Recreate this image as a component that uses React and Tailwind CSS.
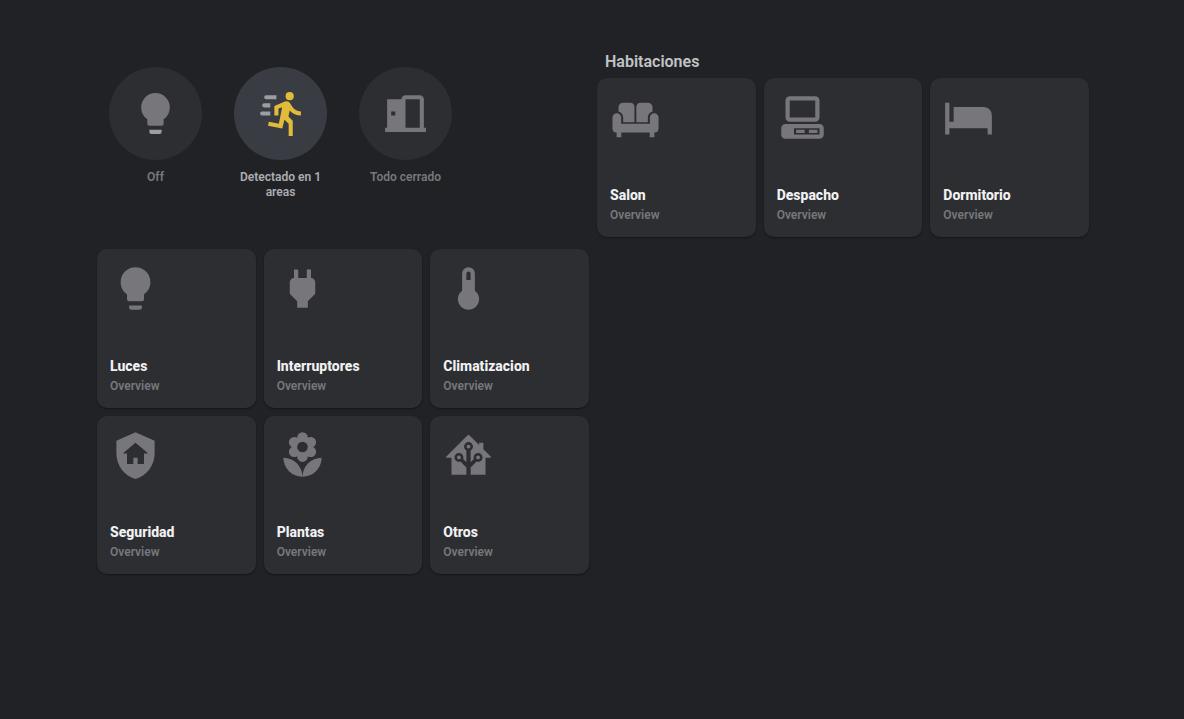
const lightbulb =
  'M12,2A7,7 0 0,0 5,9C5,11.38 6.19,13.47 8,14.74V17A1,1 0 0,0 9,18H15A1,1 0 0,0 16,17V14.74C17.81,13.47 19,11.38 19,9A7,7 0 0,0 12,2Z';
const lightbulbBase = 'M9,21A1,1 0 0,0 10,22H14A1,1 0 0,0 15,21V20H9V21Z';
const runner =
  'M16.5,5.5A2,2 0 0,0 18.5,3.5A2,2 0 0,0 16.5,1.5A2,2 0 0,0 14.5,3.5A2,2 0 0,0 16.5,5.5M12.9,19.4L13.9,15L16,17V23H18V15.5L15.9,13.5L16.5,10.5C17.89,12.09 19.89,13 22,13V11C20.24,11.03 18.6,10.11 17.7,8.6L16.7,7C16.34,6.4 15.7,6 15,6C14.7,6 14.5,6.1 14.2,6.1L9,8.3V13H11V9.6L12.8,8.9L11.2,17L6.3,16L5.9,18L12.9,19.4Z';
const speedLines =
  'M4,9A1,1 0 0,1 3,8A1,1 0 0,1 4,7H7V9H4M5,5A1,1 0 0,1 4,4A1,1 0 0,1 5,3H10V5H5M3,13A1,1 0 0,1 2,12A1,1 0 0,1 3,11H7V13H3Z';
const door =
  'M12,3C10.89,3 10,3.89 10,5H3V19H2V21H22V19H21V5C21,3.89 20.11,3 19,3H12M12,5H19V19H12V5M5,11H7V13H5V11Z';
const sofa =
  'M6.2,5H9.5A2,2 0 0,1 11.5,7V14.2H6.2V12.4A3.2,3.2 0 0,0 4,9.2V7.2A2.2,2.2 0 0,1 6.2,5M14.4,5H17.8A2.2,2.2 0 0,1 20,7.2V9.2A3.2,3.2 0 0,0 17.8,12.4V14.2H12.4V7A2,2 0 0,1 14.4,5M3.2,10A2.05,2.05 0 0,1 5.25,12.05V14.9H18.75V12.05A2.05,2.05 0 0,1 22.85,12.05V17A2.1,2.1 0 0,1 20.9,19.1V21.3H18.7V19.1H5.3V21.3H3.1V19.1A2.1,2.1 0 0,1 1.15,17V12.05A2.05,2.05 0 0,1 3.2,10Z';
const desktop =
  'M6,2C4.89,2 4,2.89 4,4V12C4,13.11 4.89,14 6,14H18C19.11,14 20,13.11 20,12V4C20,2.89 19.11,2 18,2H6M6,4H18V12H6V4M4,15C2.89,15 2,15.89 2,17V20C2,21.11 2.89,22 4,22H20C21.11,22 22,21.11 22,20V17C22,15.89 21.11,15 20,15H4M8,17H20V20H8V17M9,17.75V19.25H13V17.75H9M15,17.75V19.25H19V17.75H15Z';
const bed = 'M19,7H5V14H3V5H1V20H3V17H21V20H23V11A4,4 0 0,0 19,7';
const plug =
  'M16,7V3H14V7H10V3H8V7H8C7,7 6,8 6,9V14.5L9.5,18V21H14.5V18L18,14.5V9C18,8 17,7 16,7Z';
const thermometer =
  'M15,13V5A3,3 0 0,0 12,2A3,3 0 0,0 9,5V13A5,5 0 1,0 15,13M12,4A1,1 0 0,1 13,5V8H11V5A1,1 0 0,1 12,4Z';
const shieldHome =
  'M11,13H13V16H16V11H18L12,6L6,11H8V16H11V13M12,1L21,5V11C21,16.55 17.16,21.74 12,23C6.84,21.74 3,16.55 3,11V5L12,1Z';
const flower =
  'M3,13A9,9 0 0,0 12,22C12,17 7.97,13 3,13M12,5.5A2.5,2.5 0 0,1 14.5,8A2.5,2.5 0 0,1 12,10.5A2.5,2.5 0 0,1 9.5,8A2.5,2.5 0 0,1 12,5.5M5.6,10.25A2.5,2.5 0 0,0 8.1,12.75C8.63,12.75 9.12,12.58 9.5,12.31C9.5,12.37 9.5,12.43 9.5,12.5A2.5,2.5 0 0,0 12,15A2.5,2.5 0 0,0 14.5,12.5C14.5,12.43 14.5,12.37 14.5,12.31C14.88,12.58 15.37,12.75 15.9,12.75C17.28,12.75 18.4,11.63 18.4,10.25C18.4,9.25 17.81,8.4 16.97,8C17.81,7.6 18.4,6.74 18.4,5.75C18.4,4.37 17.28,3.25 15.9,3.25C15.37,3.25 14.88,3.41 14.5,3.69C14.5,3.63 14.5,3.56 14.5,3.5A2.5,2.5 0 0,0 12,1A2.5,2.5 0 0,0 9.5,3.5C9.5,3.56 9.5,3.63 9.5,3.69C9.12,3.41 8.63,3.25 8.1,3.25A2.5,2.5 0 0,0 5.6,5.75C5.6,6.74 6.19,7.6 7.03,8C6.19,8.4 5.6,9.25 5.6,10.25M12,22A9,9 0 0,0 21,13C16,13 12,17 12,22Z';
const homeTree =
  'M21.8,13H20V21H13V17.67L15.79,14.88L16.5,15C17.66,15 18.6,14.06 18.6,12.9C18.6,11.74 17.66,10.8 16.5,10.8A2.1,2.1 0 0,0 14.4,12.9L14.5,13.61L13,15.13V9.65C13.66,9.29 14.1,8.6 14.1,7.8A2.1,2.1 0 0,0 12,5.7A2.1,2.1 0 0,0 9.9,7.8C9.9,8.6 10.34,9.29 11,9.65V15.13L9.5,13.61L9.6,12.9A2.1,2.1 0 0,0 7.5,10.8A2.1,2.1 0 0,0 5.4,12.9A2.1,2.1 0 0,0 7.5,15L8.21,14.88L11,17.67V21H4V13H2.25C1.83,13 1.42,13 1.42,12.79C1.43,12.57 1.85,12.15 2.28,11.72L11,3C11.33,2.67 11.67,2.33 12,2.33C12.33,2.33 12.67,2.67 13,3L17,7V6H19V9L21.78,11.78C22.18,12.18 22.59,12.59 22.6,12.8C22.6,13 22.2,13 21.8,13M7.5,12A0.9,0.9 0 0,1 8.4,12.9A0.9,0.9 0 0,1 7.5,13.8A0.9,0.9 0 0,1 6.6,12.9A0.9,0.9 0 0,1 7.5,12M16.5,12C17,12 17.4,12.4 17.4,12.9C17.4,13.4 17,13.8 16.5,13.8A0.9,0.9 0 0,1 15.6,12.9A0.9,0.9 0 0,1 16.5,12M12,6.9C12.5,6.9 12.9,7.3 12.9,7.8C12.9,8.3 12.5,8.7 12,8.7C11.5,8.7 11.1,8.3 11.1,7.8C11.1,7.3 11.5,6.9 12,6.9Z';

const statuses = [
  { label: 'Off', main: lightbulb, accent: lightbulbBase },
  { label: 'Detectado en 1 areas', main: runner, accent: speedLines, active: true },
  { label: 'Todo cerrado', main: door },
];

const categories = [
  { name: 'Luces', icon: lightbulb + lightbulbBase },
  { name: 'Interruptores', icon: plug },
  { name: 'Climatizacion', icon: thermometer },
  { name: 'Seguridad', icon: shieldHome },
  { name: 'Plantas', icon: flower },
  { name: 'Otros', icon: homeTree },
];

const rooms = [
  { name: 'Salon', icon: sofa },
  { name: 'Despacho', icon: desktop },
  { name: 'Dormitorio', icon: bed },
];

function StatusButton({ label, main, accent, active }) {
  return (
    <button type="button" className="flex w-[93px] flex-col items-center gap-[10px]">
      <span
        className={`flex aspect-square w-full items-center justify-center rounded-full ${
          active ? 'bg-[#3a3c44]' : 'bg-[#2d2e32]'
        }`}
      >
        <svg viewBox="0 0 24 24" className="size-[49px]" aria-hidden="true">
          <path d={main} className={active ? 'fill-[#e1bc3b]' : 'fill-[#77767b]'} />
          {accent && <path d={accent} className="fill-[#9b9ea3]" />}
        </svg>
      </span>
      <span
        className={`text-center text-xs/[15px] font-semibold ${
          active ? 'text-[#adaeb1]' : 'text-[#77787b]'
        }`}
      >
        {label}
      </span>
    </button>
  );
}

function Card({ name, icon }) {
  return (
    <button
      type="button"
      className="flex aspect-square flex-col items-start justify-between rounded-[10px] bg-[#2d2e32] px-[13px] pt-[14px] pb-3 text-left shadow-[0_1px_2px_rgba(0,0,0,0.4)]"
    >
      <svg viewBox="0 0 24 24" className="size-[51px] fill-[#77767b]" aria-hidden="true">
        <path d={icon} fillRule="evenodd" />
      </svg>
      <span className="flex flex-col">
        <span className="text-sm/5 font-extrabold text-[#f1f1f2]">{name}</span>
        <span className="text-xs/5 font-semibold text-[#77787b]">Overview</span>
      </span>
    </button>
  );
}

export default function App() {
  return (
    <main className="grid min-h-screen grid-cols-2 content-start gap-2 bg-[#212226] pt-[51px] pr-[95px] pb-12 pl-[97px] font-['Roboto',sans-serif]">
      <section>
        <div className="flex gap-8 px-3 pt-4 pb-[49px]">
          {statuses.map((s) => (
            <StatusButton key={s.label} {...s} />
          ))}
        </div>
        <div className="grid grid-cols-3 gap-2">
          {categories.map((c) => (
            <Card key={c.name} {...c} />
          ))}
        </div>
      </section>
      <section>
        <h2 className="px-2 pt-px pb-[6px] text-base/5 font-semibold text-[#c3c4c6]">Habitaciones</h2>
        <div className="grid grid-cols-3 gap-2">
          {rooms.map((r) => (
            <Card key={r.name} {...r} />
          ))}
        </div>
      </section>
    </main>
  );
}
